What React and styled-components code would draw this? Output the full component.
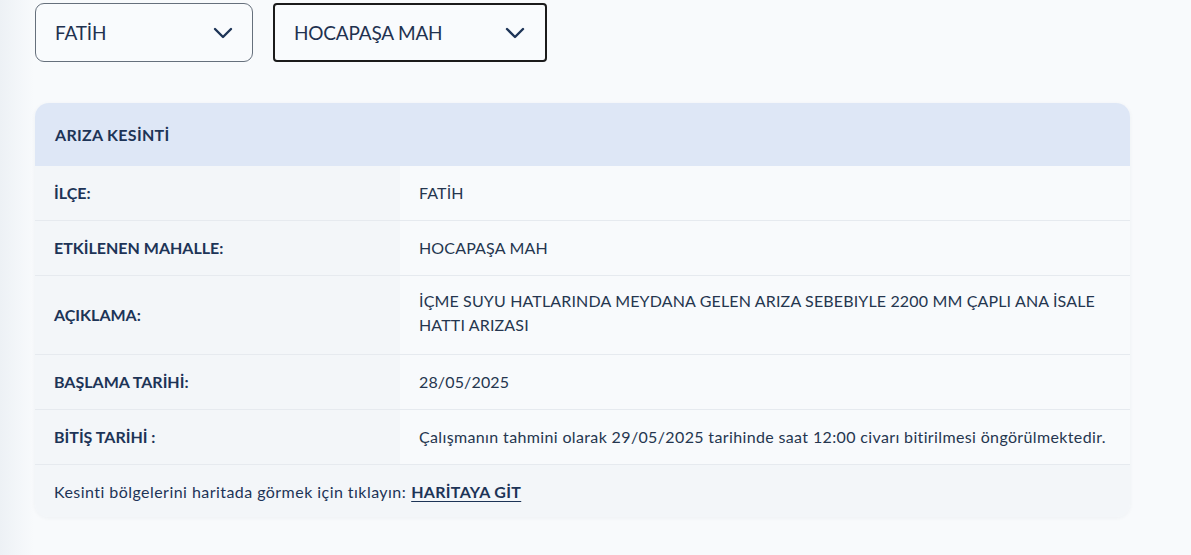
import React from 'react';
import styled, { createGlobalStyle } from 'styled-components';

const GlobalStyle = createGlobalStyle`
  html, body {
    margin: 0;
    padding: 0;
  }
  body {
    background: linear-gradient(to right, #edf1f5 0, #f3f6f9 18px, #f8fafc 34px);
    font-family: Lato, "Noto Sans", sans-serif;
    color: #1f3250;
    min-height: 555px;
  }
`;

const Page = styled.div`
  padding: 3px 61px 40px 35px;
`;

const Filters = styled.div`
  display: flex;
  gap: 20px;
`;

const Select = styled.div`
  box-sizing: border-box;
  display: flex;
  align-items: center;
  justify-content: space-between;
  width: ${(p) => p.$width}px;
  height: 59px;
  padding: 0 19px;
  background: #f9fbfd;
  border: ${(p) => (p.$focused ? '2px solid #1b1b1b' : '1px solid #66707c')};
  border-radius: ${(p) => (p.$focused ? '4px' : '9px')};
  font-size: 19px;
  color: #1f3250;
  letter-spacing: -0.2px;

  svg {
    flex: none;
    margin-right: ${(p) => (p.$focused ? '1px' : '0')};
  }
`;

const Card = styled.div`
  margin-top: 41px;
  width: 1095px;
  border-radius: 14px;
  overflow: hidden;
  background: #f8fafc;
  box-shadow: 0 1px 4px rgba(30, 50, 80, 0.05);
`;

const CardHeader = styled.div`
  height: 63px;
  display: flex;
  align-items: center;
  padding: 0 20px;
  background: #dee7f6;
  font-size: 16px;
  font-weight: 700;
  letter-spacing: 0.3px;
  color: #1d3457;
`;

const Row = styled.div`
  display: grid;
  grid-template-columns: 365px 1fr;
  border-bottom: 1px solid #e6eaef;
  font-size: 16px;
  line-height: 24px;
`;

const Label = styled.div`
  display: flex;
  align-items: center;
  padding: 15px 19px;
  background: #f3f6f9;
  font-weight: 700;
  color: #1d3457;
`;

const Value = styled.div`
  padding: ${(p) => (p.$multi ? '13px 19px 17px' : '15px 19px')};
  color: #25364f;
  letter-spacing: ${(p) => (p.$wide ? '0.36px' : '0.15px')};
`;

const Footer = styled.div`
  height: 52px;
  display: flex;
  align-items: center;
  padding: 0 19px;
  background: #f3f6f9;
  font-size: 16px;
  letter-spacing: 0.45px;
  color: #1d3457;

  a {
    margin-left: 5px;
    color: #1d3457;
    font-weight: 700;
    letter-spacing: 0.3px;
    text-decoration: underline;
    text-underline-offset: 3px;
  }
`;

const Chevron = () => (
  <svg width="20" height="12" viewBox="0 0 20 12" fill="none">
    <path d="M2 2l8 8 8-8" stroke="#1d3457" strokeWidth="2.4" strokeLinecap="round" strokeLinejoin="round" />
  </svg>
);

const rows = [
  { label: 'İLÇE:', value: 'FATİH' },
  { label: 'ETKİLENEN MAHALLE:', value: 'HOCAPAŞA MAH' },
  {
    label: 'AÇIKLAMA:',
    value: 'İÇME SUYU HATLARINDA MEYDANA GELEN ARIZA SEBEBIYLE 2200 MM ÇAPLI ANA İSALE HATTI ARIZASI',
    multi: true,
  },
  { label: 'BAŞLAMA TARİHİ:', value: '28/05/2025' },
  {
    label: 'BİTİŞ TARİHİ :',
    value: 'Çalışmanın tahmini olarak 29/05/2025 tarihinde saat 12:00 civarı bitirilmesi öngörülmektedir.',
    wide: true,
  },
];

export default function App() {
  return (
    <>
      <GlobalStyle />
      <Page>
        <Filters>
          <Select $width={218}>
            FATİH
            <Chevron />
          </Select>
          <Select $width={274} $focused>
            HOCAPAŞA MAH
            <Chevron />
          </Select>
        </Filters>

        <Card>
          <CardHeader>ARIZA KESİNTİ</CardHeader>
          {rows.map((r) => (
            <Row key={r.label}>
              <Label>{r.label}</Label>
              <Value $multi={r.multi} $wide={r.wide}>{r.value}</Value>
            </Row>
          ))}
          <Footer>
            Kesinti bölgelerini haritada görmek için tıklayın:
            <a href="#harita">HARİTAYA GİT</a>
          </Footer>
        </Card>
      </Page>
    </>
  );
}
